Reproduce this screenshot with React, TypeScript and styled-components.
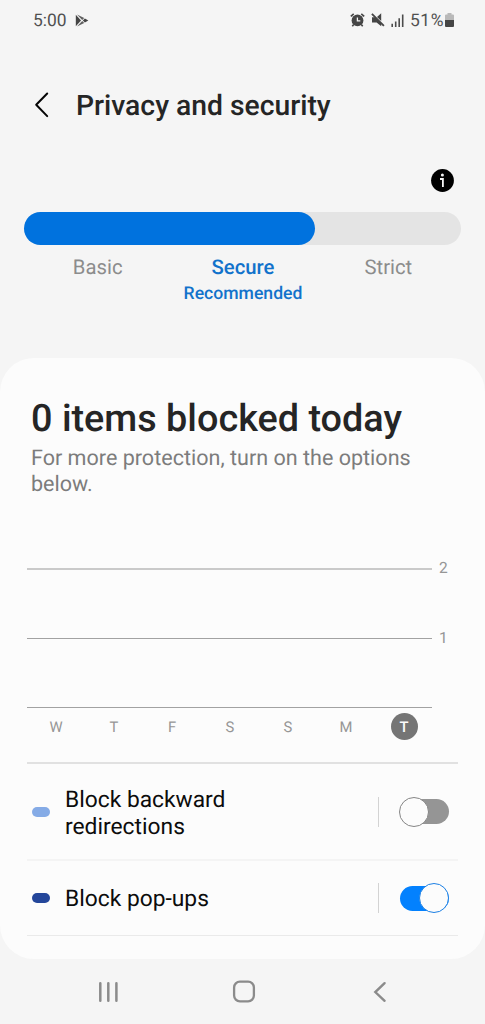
import React, { useState } from "react";
import styled, { createGlobalStyle } from "styled-components";

const GlobalStyle = createGlobalStyle`
  * { box-sizing: border-box; }
  body {
    margin: 0;
    background: #f5f5f5;
    font-family: Roboto, "Liberation Sans", sans-serif;
    text-rendering: geometricPrecision;
  }
  h1, h2, p { margin: 0; }
  button { border: 0; padding: 0; background: none; font: inherit; }
  svg { display: block; flex: none; }
`;

const Screen = styled.div`
  display: flex;
  flex-direction: column;
  width: 485px;
  height: 1024px;
  overflow: hidden;
  background: #f5f5f5;
`;

const StatusBar = styled.div`
  display: flex;
  justify-content: space-between;
  height: 40px;
  padding: 0 31px 0 33px;
  color: #505050;
  font-size: 17.4px;
  line-height: 40px;
`;

const StatusText = styled.span<{ $spacing?: number }>`
  height: 40px;
  padding-top: 1px;
  letter-spacing: ${(p) => p.$spacing ?? 0}px;
`;

const StatusGroup = styled.div<{ $gap: number }>`
  display: flex;
  align-items: center;
  gap: ${(p) => p.$gap}px;
`;

const Header = styled.header`
  display: flex;
  align-items: center;
  height: 129px;
  padding-left: 34px;
`;

const BackButton = styled.button`
  width: 42px;
  height: 30px;
`;

const Title = styled.h1`
  padding-top: 2px;
  font-size: 28.3px;
  font-weight: 500;
  line-height: 32px;
  color: #252525;
`;

const InfoRow = styled.div`
  display: flex;
  justify-content: flex-end;
  height: 43px;
  padding-right: 31px;
`;

const LevelTrack = styled.div`
  height: 33px;
  margin: 0 24px;
  border-radius: 17px;
  background: #e4e4e4;
`;

const LevelFill = styled.div`
  width: 291px;
  height: 33px;
  border-radius: 17px;
  background: #0072de;
`;

const Levels = styled.div`
  display: grid;
  grid-template-columns: repeat(3, 1fr);
  height: 113px;
  margin: 0 24px;
  padding: 10px 0 0 1px;
  text-align: center;
`;

const Level = styled.div<{ $active?: boolean }>`
  font-size: 20.3px;
  line-height: 25px;
  font-weight: ${(p) => (p.$active ? 500 : 400)};
  color: ${(p) => (p.$active ? "#1272cb" : "#8c8c8c")};
`;

const LevelNote = styled.div`
  padding-top: 1px;
  font-size: 17.6px;
  line-height: 26px;
`;

const Card = styled.main`
  height: 601px;
  padding: 39px 27px 0;
  border-radius: 34px;
  background: #fcfcfc;
`;

const Headline = styled.h2`
  padding-left: 4px;
  font-size: 37.8px;
  font-weight: 500;
  line-height: 44px;
  color: #252525;
`;

const Hint = styled.p`
  height: 127px;
  padding: 5px 20px 0 4px;
  font-size: 21.55px;
  line-height: 26px;
  color: #7c7c7c;
`;

const GridLine = styled.div<{ $height: number }>`
  display: flex;
  align-items: flex-start;
  gap: 7px;
  height: ${(p) => p.$height}px;
`;

const Rule = styled.div<{ $soft?: boolean }>`
  width: 405px;
  height: ${(p) => (p.$soft ? 2 : 1)}px;
  background: ${(p) => (p.$soft ? "#cacaca" : "#a2a2a2")};
`;

const AxisValue = styled.span`
  margin-top: -9px;
  font-size: 15.5px;
  line-height: 18px;
  color: #969696;
`;

const Days = styled.div`
  display: grid;
  grid-template-columns: repeat(7, 58px);
  justify-items: center;
  height: 50px;
  padding-top: 1px;
`;

const Day = styled.span<{ $today?: boolean }>`
  width: 27px;
  height: 27px;
  border-radius: 50%;
  font-size: 14.8px;
  font-weight: ${(p) => (p.$today ? 500 : 400)};
  line-height: 28px;
  text-align: center;
  color: ${(p) => (p.$today ? "#fcfcfc" : "#969696")};
  background: ${(p) => (p.$today ? "#757575" : "transparent")};
`;

const Option = styled.div<{ $height: number; $line: string; $thick?: boolean }>`
  display: flex;
  align-items: center;
  width: 431px;
  height: ${(p) => p.$height}px;
  padding: 0 9px 0 5px;
  border-bottom: ${(p) => (p.$thick ? 2 : 1)}px solid ${(p) => p.$line};
`;

const Divider = styled.div`
  width: 431px;
  height: 2px;
  background: #e1e1e1;
`;

const Marker = styled.span<{ $color: string }>`
  width: 18px;
  height: 10px;
  border-radius: 5px;
  background: ${(p) => p.$color};
`;

const OptionLabel = styled.span<{ $multiline?: boolean }>`
  width: 190px;
  margin-left: 15px;
  padding-top: ${(p) => (p.$multiline ? 3 : 1)}px;
  font-size: 22.8px;
  line-height: 27px;
  color: #0c0c0c;
`;

const Separator = styled.span`
  width: 1px;
  height: 30px;
  margin-left: auto;
  background: #d3d3d3;
`;

const Switch = styled.button<{ $on: boolean }>`
  display: flex;
  align-items: center;
  justify-content: ${(p) => (p.$on ? "flex-end" : "flex-start")};
  width: 49px;
  height: 25px;
  margin-left: 21px;
  border-radius: 13px;
  background: ${(p) => (p.$on ? "#0381fe" : "#959595")};
`;

const Knob = styled.span<{ $on: boolean }>`
  flex: none;
  width: 30px;
  height: 30px;
  margin-left: -1px;
  border: 1px solid ${(p) => (p.$on ? "#1c80e4" : "#858585")};
  border-radius: 50%;
  background: #fcfcfc;
`;

const NavBar = styled.nav`
  display: grid;
  grid-template-columns: 134px 141px 14px;
  align-items: center;
  height: 65px;
  padding-left: 98px;
`;

const PlayIcon = () => (
  <svg width="14" height="13" viewBox="0 0 14 13">
    <path d="M.8.8v11.4L6 6.5Z" fill="#454545" />
    <path d="m2 .4 7.2 3.7-2 1.8ZM2 12.6l7.2-3.7-2-1.8Z" fill="#606060" />
    <path d="m9.9 4.6 3.4 1.9-3.4 1.9-2-1.9Z" fill="#454545" />
  </svg>
);

const AlarmIcon = () => (
  <svg width="15" height="14" viewBox="0 0 15 14">
    <circle cx="7.5" cy="7.4" r="5.9" fill="#454545" />
    <path d="M.8 3.4 3.7.9M14.2 3.4 11.3.9M3.7 11.5 2.3 13.3M11.3 11.5l1.4 1.8" stroke="#454545" strokeWidth="1.6" fill="none" />
    <path d="M7.4 4.4v3.4h2.9" stroke="#f5f5f5" strokeWidth="1.3" fill="none" />
  </svg>
);

const MuteIcon = () => (
  <svg width="14" height="14" viewBox="0 0 14 14">
    <path d="M1 4.2h3.4l5.8 6v3L5.6 9.6H1ZM6 3.9 10.2.3v7.8Z" fill="#454545" />
    <path d="m.9.9 12 12" stroke="#454545" strokeWidth="1.9" />
  </svg>
);

const SignalIcon = () => (
  <svg width="13" height="13" viewBox="0 0 13 13">
    <path d="M1.2 9.8V13M4.7 7.4V13M8.2 4.3V13M11.7.6V13" stroke="#4c4c4c" strokeWidth="1.6" />
  </svg>
);

const BatteryIcon = () => (
  <svg width="9" height="14" viewBox="0 0 9 14">
    <path d="M2.5 0h4v1.4H8a1 1 0 0 1 1 1V7H0V2.4a1 1 0 0 1 1-1h1.5Z" fill="#b9b9b9" />
    <path d="M0 7h9v6a1 1 0 0 1-1 1H1a1 1 0 0 1-1-1Z" fill="#454545" />
  </svg>
);

const BackIcon = () => (
  <svg width="16" height="28" viewBox="0 0 16 28">
    <path d="M13.2 2.5 2.2 13.8l11 11.3" fill="none" stroke="#050505" strokeWidth="2" strokeLinecap="round" strokeLinejoin="round" />
  </svg>
);

const InfoIcon = () => (
  <svg width="23" height="23" viewBox="0 0 23 23">
    <circle cx="11.5" cy="11.5" r="11.4" fill="#000" />
    <circle cx="11.4" cy="5.9" r="1.5" fill="#f5f5f5" />
    <path d="M9 10h2.9v8" fill="none" stroke="#f5f5f5" strokeWidth="1.8" />
  </svg>
);

const RecentsIcon = () => (
  <svg width="21" height="22" viewBox="0 0 21 22">
    <path d="M2.3 2.2v17.6M10.3 2.2v17.6M18.4 2.2v17.6" stroke="#8b8b8b" strokeWidth="2.5" strokeLinecap="round" />
  </svg>
);

const HomeIcon = () => (
  <svg width="24" height="23" viewBox="0 0 24 23">
    <rect x="2.1" y="1.7" width="19.8" height="19.6" rx="5.8" fill="none" stroke="#8b8b8b" strokeWidth="2.3" />
  </svg>
);

const NavBackIcon = () => (
  <svg width="14" height="22" viewBox="0 0 14 22">
    <path d="m11.6 2.2-9.3 8.9 9.3 8.7" fill="none" stroke="#8b8b8b" strokeWidth="2.4" strokeLinecap="round" strokeLinejoin="miter" />
  </svg>
);

const days = ["W", "T", "F", "S", "S", "M", "T"];

export default function App() {
  const [backward, setBackward] = useState(false);
  const [popups, setPopups] = useState(true);

  return (
    <>
      <GlobalStyle />
      <Screen>
        <StatusBar>
          <StatusGroup $gap={8}>
            <StatusText>5:00</StatusText>
            <PlayIcon />
          </StatusGroup>
          <StatusGroup $gap={6}>
            <AlarmIcon />
            <MuteIcon />
            <SignalIcon />
            <StatusGroup $gap={1}>
              <StatusText $spacing={0.6}>51%</StatusText>
              <BatteryIcon />
            </StatusGroup>
          </StatusGroup>
        </StatusBar>
        <Header>
          <BackButton aria-label="Back">
            <BackIcon />
          </BackButton>
          <Title>Privacy and security</Title>
        </Header>
        <InfoRow>
          <InfoIcon />
        </InfoRow>
        <LevelTrack>
          <LevelFill />
        </LevelTrack>
        <Levels>
          <Level>Basic</Level>
          <Level $active>
            Secure
            <LevelNote>Recommended</LevelNote>
          </Level>
          <Level>Strict</Level>
        </Levels>
        <Card>
          <Headline>0 items blocked today</Headline>
          <Hint>For more protection, turn on the options below.</Hint>
          <GridLine $height={70}>
            <Rule $soft />
            <AxisValue>2</AxisValue>
          </GridLine>
          <GridLine $height={69}>
            <Rule />
            <AxisValue>1</AxisValue>
          </GridLine>
          <GridLine $height={5}>
            <Rule />
          </GridLine>
          <Days>
            {days.map((day, i) => (
              <Day key={i} $today={i === days.length - 1}>
                {day}
              </Day>
            ))}
          </Days>
          <Divider />
          <Option $height={97} $line="#f4f4f4" $thick>
            <Marker $color="#85abe6" />
            <OptionLabel $multiline>Block backward redirections</OptionLabel>
            <Separator />
            <Switch $on={backward} aria-label="Block backward redirections" onClick={() => setBackward(!backward)}>
              <Knob $on={backward} />
            </Switch>
          </Option>
          <Option $height={75} $line="#eaeaea">
            <Marker $color="#24469a" />
            <OptionLabel>Block pop-ups</OptionLabel>
            <Separator />
            <Switch $on={popups} aria-label="Block pop-ups" onClick={() => setPopups(!popups)}>
              <Knob $on={popups} />
            </Switch>
          </Option>
        </Card>
        <NavBar>
          <RecentsIcon />
          <HomeIcon />
          <NavBackIcon />
        </NavBar>
      </Screen>
    </>
  );
}
